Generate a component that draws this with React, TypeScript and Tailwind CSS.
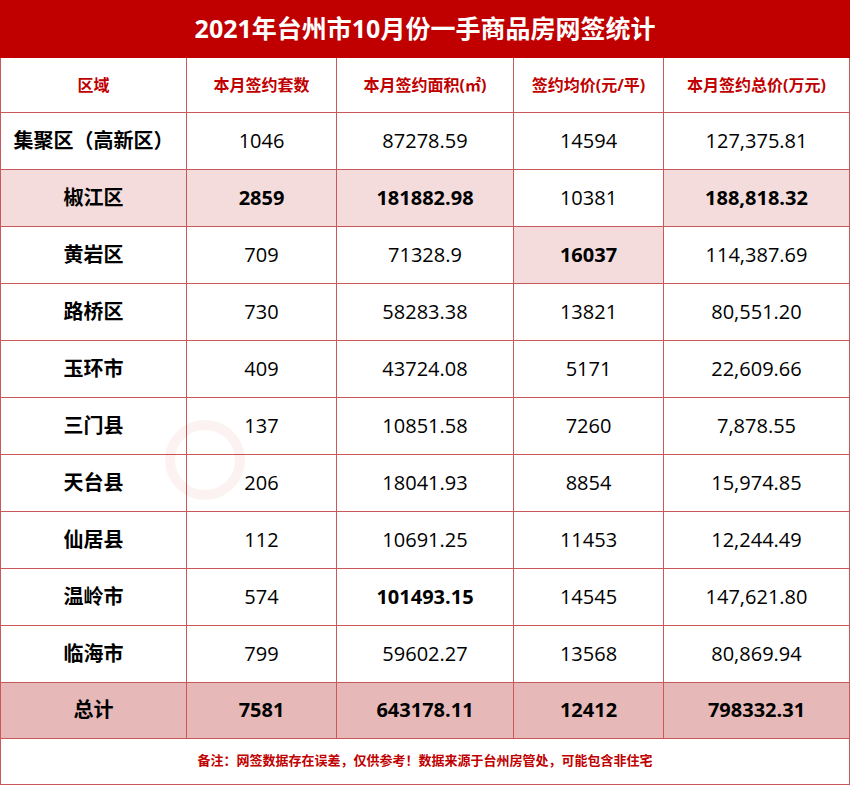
import React from 'react';

interface Row {
  area: string;
  count: string;
  size: string;
  avg: string;
  total: string;
  pink?: number[];
  bold?: number[];
}

const rows: Row[] = [
  { area: '集聚区（高新区）', count: '1046', size: '87278.59', avg: '14594', total: '127,375.81' },
  { area: '椒江区', count: '2859', size: '181882.98', avg: '10381', total: '188,818.32', pink: [0, 1, 2, 4], bold: [1, 2, 4] },
  { area: '黄岩区', count: '709', size: '71328.9', avg: '16037', total: '114,387.69', pink: [3], bold: [3] },
  { area: '路桥区', count: '730', size: '58283.38', avg: '13821', total: '80,551.20' },
  { area: '玉环市', count: '409', size: '43724.08', avg: '5171', total: '22,609.66' },
  { area: '三门县', count: '137', size: '10851.58', avg: '7260', total: '7,878.55' },
  { area: '天台县', count: '206', size: '18041.93', avg: '8854', total: '15,974.85' },
  { area: '仙居县', count: '112', size: '10691.25', avg: '11453', total: '12,244.49' },
  { area: '温岭市', count: '574', size: '101493.15', avg: '14545', total: '147,621.80', bold: [2] },
  { area: '临海市', count: '799', size: '59602.27', avg: '13568', total: '80,869.94' },
];

const headers = ['区域', '本月签约套数', '本月签约面积(㎡)', '签约均价(元/平)', '本月签约总价(万元)'];

const font = { fontFamily: '"Open Sans", "Noto Sans CJK SC", sans-serif' };

export default function App() {
  return (
    <div className="relative w-[850px] h-[785px] bg-white overflow-hidden" style={font}>
      <div className="h-[58px] bg-[#c00000] flex items-center justify-center">
        <h1 className="text-white text-[25px] font-bold">2021年台州市10月份一手商品房网签统计</h1>
      </div>
      <table className="border-collapse table-fixed w-[849px]">
        <colgroup>
          <col className="w-[186px]" />
          <col className="w-[150px]" />
          <col className="w-[177px]" />
          <col className="w-[150px]" />
          <col className="w-[186px]" />
        </colgroup>
        <thead>
          <tr className="h-[54px]">
            {headers.map((h) => (
              <th key={h} className="border border-[#c9585a] border-t-0 text-[#c00000] text-[16px] font-bold text-center">
                {h}
              </th>
            ))}
          </tr>
        </thead>
        <tbody>
          {rows.map((r) => {
            const cells = [r.area, r.count, r.size, r.avg, r.total];
            return (
              <tr key={r.area} className="h-[57px]">
                {cells.map((c, i) => (
                  <td
                    key={i}
                    className={`border border-[#c9585a] text-center text-[20px] text-black ${
                      i === 0 || r.bold?.includes(i) ? 'font-bold' : 'font-normal'
                    } ${r.pink?.includes(i) ? 'bg-[#f3dcdb]' : ''}`}
                  >
                    {c}
                  </td>
                ))}
              </tr>
            );
          })}
          <tr className="h-[56px] bg-[#e6b8b7]">
            {['总计', '7581', '643178.11', '12412', '798332.31'].map((c) => (
              <td key={c} className="border border-[#c9585a] text-center text-[20px] font-bold text-black">
                {c}
              </td>
            ))}
          </tr>
          <tr className="h-[46px]">
            <td colSpan={5} className="border border-[#c9585a] text-center text-[13px] font-bold text-[#c00000]">
              备注：网签数据存在误差，仅供参考！数据来源于台州房管处，可能包含非住宅
            </td>
          </tr>
        </tbody>
      </table>

      {/* faint watermark logo */}
      <div className="absolute left-[165px] top-[420px] w-[80px] h-[80px] rounded-full border-[10px] border-[#c00000] opacity-[0.05] pointer-events-none" />
    </div>
  );
}
